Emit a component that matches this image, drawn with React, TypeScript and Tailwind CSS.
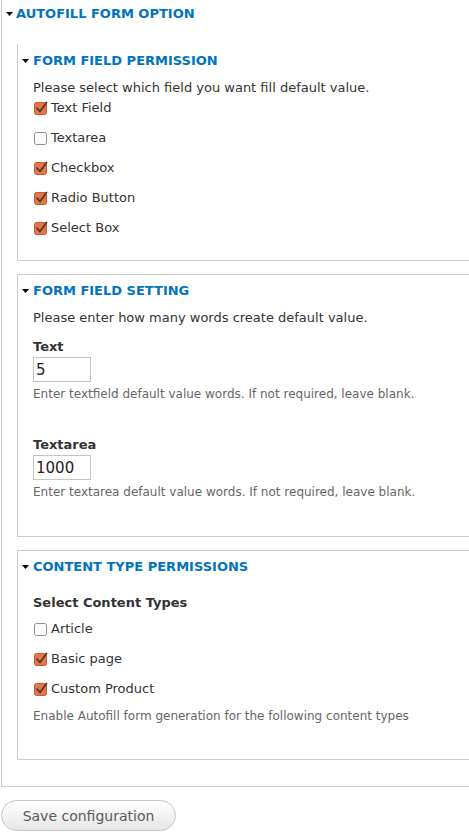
import React from 'react';

const Arrow: React.FC = () => (
  <svg width="7" height="4" viewBox="0 0 7 4" className="shrink-0">
    <polygon points="0,0 7,0 3.5,4" fill="#000" />
  </svg>
);

const Box: React.FC<{ checked?: boolean }> = ({ checked }) =>
  checked ? (
    <svg width="14" height="14" viewBox="0 0 14 14" className="shrink-0">
      <rect x="0.5" y="1.5" width="12" height="12" rx="2" fill="#e5754b" stroke="#c9582e" />
      <path d="M3 7.2 L6 10.5 L12.5 1.5" fill="none" stroke="#4b3a32" strokeWidth="1.8" strokeLinecap="round" strokeLinejoin="round" />
    </svg>
  ) : (
    <svg width="14" height="14" viewBox="0 0 14 14" className="shrink-0">
      <rect x="0.5" y="1.5" width="12" height="12" rx="2" fill="#fff" stroke="#8d8d8d" />
    </svg>
  );

const Option: React.FC<{ label: string; checked?: boolean }> = ({ label, checked }) => (
  <div className="flex h-[18px] items-center gap-[3px] pl-[1px]">
    <Box checked={checked} />
    <span>{label}</span>
  </div>
);

const Legend: React.FC<{ title: string; h: string }> = ({ title, h }) => (
  <div className={`flex items-center gap-[4px] pl-[4px] ${h}`}>
    <Arrow />
    <span className="font-bold uppercase text-[#0074bd]">{title}</span>
  </div>
);

const Input: React.FC<{ value: string }> = ({ value }) => (
  <div className="flex h-[25px] w-[58px] items-center border border-[#c4c4c4] px-[2px] text-[15px] text-[#222]">
    {value}
  </div>
);

export default function App() {
  return (
    <div className="min-h-[838px] w-full overflow-hidden bg-white font-['DejaVu_Sans',sans-serif] text-[13px] leading-[18px] text-[#333]">
      {/* outer fieldset */}
      <div className="ml-[1px] border-b border-l border-[#cccccc]">
        <div className="flex h-[28px] items-center gap-[3px] pl-[4px]">
          <Arrow />
          <span className="font-bold uppercase text-[#0074bd]">Autofill form option</span>
        </div>

        <div className="pb-[26px] pl-[15px] pt-[16px]">
          {/* form field permission */}
          <div className="border-b border-l border-[#cccccc] pb-[23px] pt-[1px]">
            <Legend title="Form field permission" h="h-[32px]" />
            <div className="pl-[15px]">
              <p className="mt-[2px]">Please select which field you want fill default value.</p>
              <div className="mt-[2px] flex flex-col gap-[12px]">
                <Option label="Text Field" checked />
                <Option label="Textarea" />
                <Option label="Checkbox" checked />
                <Option label="Radio Button" checked />
                <Option label="Select Box" checked />
              </div>
            </div>
          </div>

          {/* form field setting */}
          <div className="mt-[13px] border-y border-l border-[#cccccc] pb-[35px] pt-[1px]">
            <Legend title="Form field setting" h="h-[30px]" />
            <div className="pl-[15px]">
              <p className="mt-[3px]">Please enter how many words create default value.</p>
              <p className="mt-[11px] font-bold">Text</p>
              <div className="mt-[1px]">
                <Input value="5" />
              </div>
              <p className="mt-[3px] text-[12px] text-[#666]">
                Enter textfield default value words. If not required, leave blank.
              </p>
              <p className="mt-[33px] font-bold">Textarea</p>
              <div className="mt-[1px]">
                <Input value="1000" />
              </div>
              <p className="mt-[3px] text-[12px] text-[#666]">
                Enter textarea default value words. If not required, leave blank.
              </p>
            </div>
          </div>

          {/* content type permissions */}
          <div className="mt-[13px] border-y border-l border-[#cccccc] pb-[34px] pt-[1px]">
            <Legend title="Content type permissions" h="h-[30px]" />
            <div className="pl-[15px]">
              <p className="mt-[12px] font-bold">Select Content Types</p>
              <div className="mt-[8px] flex flex-col gap-[12px]">
                <Option label="Article" />
                <Option label="Basic page" checked />
                <Option label="Custom Product" checked />
              </div>
              <p className="mt-[9px] text-[12px] text-[#666]">
                Enable Autofill form generation for the following content types
              </p>
            </div>
          </div>
        </div>
      </div>

      <button
        type="button"
        className="ml-[1px] mt-[13px] flex h-[31px] w-[175px] items-center justify-center rounded-full border border-[#c6c6c6] bg-gradient-to-b from-[#fefefe] to-[#e6e6e6] text-[14px] text-[#5a5a5a]"
      >
        Save configuration
      </button>
    </div>
  );
}
